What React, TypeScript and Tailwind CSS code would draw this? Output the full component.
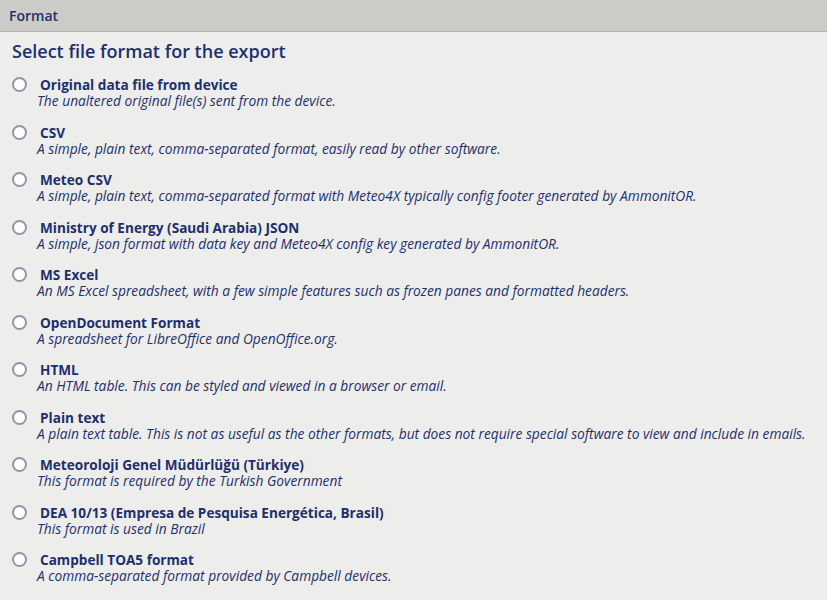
import React, { useState } from 'react';

interface ExportFormat {
  id: string;
  name: string;
  description: string;
}

const formats: ExportFormat[] = [
  { id: 'original', name: 'Original data file from device', description: 'The unaltered original file(s) sent from the device.' },
  { id: 'csv', name: 'CSV', description: 'A simple, plain text, comma-separated format, easily read by other software.' },
  { id: 'meteo-csv', name: 'Meteo CSV', description: 'A simple, plain text, comma-separated format with Meteo4X typically config footer generated by AmmonitOR.' },
  { id: 'moe-json', name: 'Ministry of Energy (Saudi Arabia) JSON', description: 'A simple, json format with data key and Meteo4X config key generated by AmmonitOR.' },
  { id: 'xlsx', name: 'MS Excel', description: 'An MS Excel spreadsheet, with a few simple features such as frozen panes and formatted headers.' },
  { id: 'ods', name: 'OpenDocument Format', description: 'A spreadsheet for LibreOffice and OpenOffice.org.' },
  { id: 'html', name: 'HTML', description: 'An HTML table. This can be styled and viewed in a browser or email.' },
  { id: 'txt', name: 'Plain text', description: 'A plain text table. This is not as useful as the other formats, but does not require special software to view and include in emails.' },
  { id: 'mgm', name: 'Meteoroloji Genel Müdürlüğü (Türkiye)', description: 'This format is required by the Turkish Government' },
  { id: 'dea', name: 'DEA 10/13 (Empresa de Pesquisa Energética, Brasil)', description: 'This format is used in Brazil' },
  { id: 'toa5', name: 'Campbell TOA5 format', description: 'A comma-separated format provided by Campbell devices.' },
];

const App: React.FC = () => {
  const [selected, setSelected] = useState<string | null>(null);

  return (
    <div
      className="min-h-[600px] bg-[#edeeeb] text-[#1d2f6e]"
      style={{ fontFamily: '"Open Sans", "Noto Sans", sans-serif' }}
    >
      <div className="h-[32px] bg-[#cbccc8] border-b border-[#b3b4b0] flex items-center px-[9px]">
        <span className="text-[14px] leading-[18px] font-semibold">Format</span>
      </div>

      <h2 className="px-3 pt-[7px] text-[18px] leading-[24px] font-semibold">
        Select file format for the export
      </h2>

      <div className="mt-[13px]">
        {formats.map((f) => (
          <label key={f.id} className="block pl-3 pb-[14.5px] cursor-pointer">
            <div className="flex items-center h-[17px]">
              <input
                type="radio"
                name="format"
                checked={selected === f.id}
                onChange={() => setSelected(f.id)}
                className="appearance-none shrink-0 w-[15px] h-[15px] rounded-full border-[2.5px] border-[#9593a6] bg-white checked:border-[4px] checked:border-[#1d2f6e]"
              />
              <span className="ml-[13px] text-[13.6px] leading-[17px] font-bold">{f.name}</span>
            </div>
            <div className="ml-[25px] text-[13.75px] leading-[16px] italic">{f.description}</div>
          </label>
        ))}
      </div>
    </div>
  );
};

export default App;
